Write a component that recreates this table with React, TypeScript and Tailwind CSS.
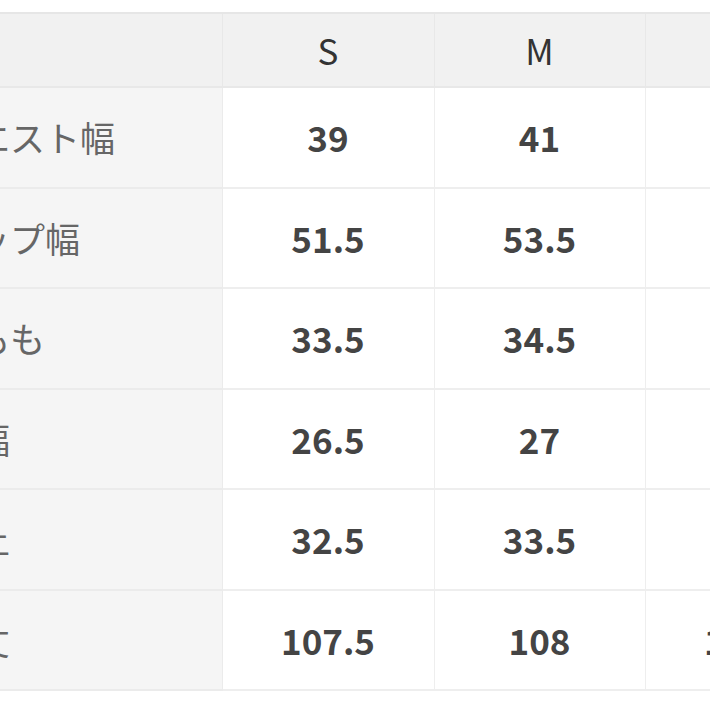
const sizes = ["S", "M", "L"];

const rows: { label: string; values: string[] }[] = [
  { label: "ウエスト幅", values: ["39", "41", "43"] },
  { label: "ヒップ幅", values: ["51.5", "53.5", "55.5"] },
  { label: "太もも", values: ["33.5", "34.5", "35.5"] },
  { label: "裾幅", values: ["26.5", "27", "27.5"] },
  { label: "股上", values: ["32.5", "33.5", "34.5"] },
  { label: "総丈", values: ["107.5", "108", "109.5"] },
];

export default function App() {
  return (
    <div
      className="w-[710px] h-[710px] overflow-hidden bg-white pt-[12px]"
      style={{ fontFamily: '"Noto Sans CJK JP", "Noto Sans", sans-serif' }}
    >
      <table className="ml-[-60px] table-fixed border-collapse w-[917px] text-[35px]">
        <colgroup>
          <col className="w-[282px]" />
          <col className="w-[212px]" />
          <col className="w-[211px]" />
          <col className="w-[212px]" />
        </colgroup>
        <thead>
          <tr className="h-[74px] bg-[#f1f1f1] border-t-2 border-[#e6e6e6]">
            <th className="border-b-2 border-r border-[#e8e8e8]" />
            {sizes.map((s) => (
              <th
                key={s}
                className="border-b-2 border-r border-[#e8e8e8] font-normal text-[#333] text-center"
              >
                {s}
              </th>
            ))}
          </tr>
        </thead>
        <tbody>
          {rows.map((row, i) => (
            <tr key={row.label} className={i % 2 === 0 ? "h-[101px]" : "h-[100px]"}>
              <td className="bg-[#f5f5f5] border-b-2 border-r border-[#ebebeb] text-[#666] text-left whitespace-nowrap">
                {row.label}
              </td>
              {row.values.map((v, j) => (
                <td
                  key={j}
                  className="border-b-2 border-r border-[#eeeeee] text-center font-bold text-[#444]"
                >
                  {v}
                </td>
              ))}
            </tr>
          ))}
        </tbody>
      </table>
    </div>
  );
}
